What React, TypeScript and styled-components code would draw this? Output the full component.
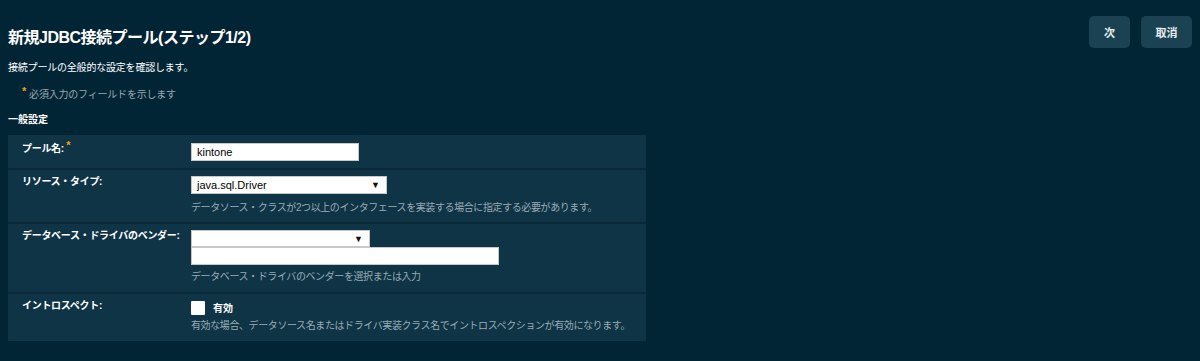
import React from "react";
import styled, { createGlobalStyle } from "styled-components";

const GlobalStyle = createGlobalStyle`
    html, body {
        margin: 0;
        padding: 0;
        background: #022536;
    }
    body {
        font-family: "Liberation Sans", "Noto Sans CJK JP", sans-serif;
        color: #ffffff;
        font-size: 10px;
    }
`;

const Page = styled.div`
    width: 1200px;
    height: 361px;
    box-sizing: border-box;
    padding: 0 8px;
    background: #022536;
`;

const Header = styled.div`
    display: flex;
    justify-content: space-between;
    align-items: flex-start;
`;

const Title = styled.h1`
    margin: 28px 0 0;
    font-size: 16px;
    line-height: 20px;
    font-weight: bold;
    letter-spacing: -0.5px;
    color: #ffffff;
`;

const ButtonBar = styled.div`
    display: flex;
    gap: 11px;
    margin-top: 16px;
`;

const Button = styled.button<{ $width: number }>`
    width: ${p => p.$width}px;
    height: 32px;
    border: none;
    border-radius: 5px;
    background: #1b4253;
    color: #e6eef2;
    font-family: inherit;
    font-size: 11px;
    font-weight: bold;
    cursor: pointer;
`;

const Description = styled.p`
    margin: 13px 0 0;
    font-size: 10px;
    line-height: 14px;
    letter-spacing: -0.2px;
    color: #ffffff;
`;

const RequiredNote = styled.p`
    margin: 13px 0 0 14px;
    font-size: 10px;
    line-height: 14px;
    letter-spacing: -0.2px;
    color: #9aa8b0;
`;

const Star = styled.span`
    color: #f0a020;
    font-weight: bold;
    font-size: 11px;
    line-height: 0;
    margin-right: 3px;
    position: relative;
    top: -3px;
`;

const SectionTitle = styled.h2`
    margin: 11px 0 0;
    font-size: 10px;
    line-height: 14px;
    font-weight: bold;
    color: #ffffff;
`;

const Table = styled.div`
    margin-top: 8px;
    width: 638px;
    background: #0e3446;
    display: flex;
    flex-direction: column;
`;

const Row = styled.div<{ $height: number }>`
    display: grid;
    grid-template-columns: 183px 1fr;
    align-items: start;
    height: ${p => p.$height}px;
    box-sizing: border-box;
    padding-top: 6px;
    border-top: 2px solid #0a2a3a;
    &:first-child {
        border-top: none;
        padding-top: 8px;
    }
`;

const Label = styled.div`
    padding-left: 14px;
    font-size: 10px;
    line-height: 12px;
    font-weight: bold;
    white-space: nowrap;
    letter-spacing: -0.3px;
    color: #ffffff;
`;

const Field = styled.div`
    display: flex;
    flex-direction: column;
    align-items: flex-start;
`;

const TextInput = styled.div<{ $width: number }>`
    width: ${p => p.$width}px;
    height: 18px;
    box-sizing: border-box;
    background: #ffffff;
    border: 1px solid #c8c8c8;
    color: #000000;
    font-size: 11px;
    line-height: 16px;
    padding-left: 5px;
`;

const Select = styled.div<{ $width: number; $height: number }>`
    width: ${p => p.$width}px;
    height: ${p => p.$height}px;
    box-sizing: border-box;
    background: #ffffff;
    border: 1px solid #c8c8c8;
    color: #000000;
    font-size: 11px;
    padding: 0 6px 0 5px;
    display: flex;
    justify-content: space-between;
    align-items: center;
`;

const Arrow = styled.span`
    font-size: 9px;
    color: #111;
`;

const Help = styled.div<{ $top: number }>`
    margin-top: ${p => p.$top}px;
    font-size: 10px;
    line-height: 14px;
    white-space: nowrap;
    letter-spacing: -0.4px;
    color: #9aabb5;
`;

const CheckLine = styled.div`
    display: flex;
    align-items: center;
    gap: 8px;
`;

const CheckBox = styled.span`
    width: 14px;
    height: 14px;
    background: #ffffff;
    border-radius: 1px;
`;

const CheckLabel = styled.span`
    font-size: 10px;
    font-weight: bold;
    color: #ffffff;
`;

export default function App() {
    return (
        <>
            <GlobalStyle />
            <Page>
                <Header>
                    <Title>新規JDBC接続プール(ステップ1/2)</Title>
                    <ButtonBar>
                        <Button $width={41}>次</Button>
                        <Button $width={51}>取消</Button>
                    </ButtonBar>
                </Header>
                <Description>接続プールの全般的な設定を確認します。</Description>
                <RequiredNote><Star>*</Star>必須入力のフィールドを示します</RequiredNote>
                <SectionTitle>一般設定</SectionTitle>
                <Table>
                    <Row $height={33}>
                        <Label>プール名: <Star>*</Star></Label>
                        <Field>
                            <TextInput $width={168}>kintone</TextInput>
                        </Field>
                    </Row>
                    <Row $height={54}>
                        <Label>リソース・タイプ:</Label>
                        <Field>
                            <Select $width={196} $height={18}>java.sql.Driver<Arrow>▼</Arrow></Select>
                            <Help $top={7}>データソース・クラスが2つ以上のインタフェースを実装する場合に指定する必要があります。</Help>
                        </Field>
                    </Row>
                    <Row $height={70}>
                        <Label>データベース・ドライバのベンダー:</Label>
                        <Field>
                            <Select $width={179} $height={17}><span /><Arrow>▼</Arrow></Select>
                            <TextInput $width={308} />
                            <Help $top={5}>データベース・ドライバのベンダーを選択または入力</Help>
                        </Field>
                    </Row>
                    <Row $height={49}>
                        <Label>イントロスペクト:</Label>
                        <Field>
                            <CheckLine>
                                <CheckBox />
                                <CheckLabel>有効</CheckLabel>
                            </CheckLine>
                            <Help $top={4}>有効な場合、データソース名またはドライバ実装クラス名でイントロスペクションが有効になります。</Help>
                        </Field>
                    </Row>
                </Table>
            </Page>
        </>
    );
}
